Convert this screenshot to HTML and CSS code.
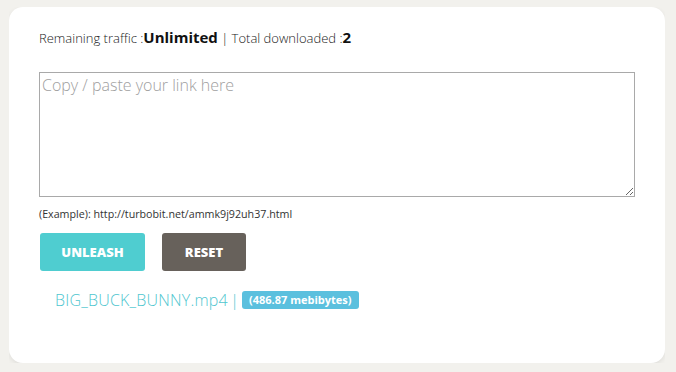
FILE: index.html
```html
<!DOCTYPE html>
<html>
<head>
  <title>Unleash</title>
  <link rel="stylesheet" href="styles.css">
</head>
<body>
  <div class="card">
    <div class="stats">
      Remaining traffic :<b class="big">Unlimited</b> | Total downloaded :<b class="big">2</b>
    </div>

    <textarea id="links" class="links" placeholder="Copy / paste your link here"></textarea>
    <div class="hint">(Example): http://turbobit.net/ammk9j92uh37.html</div>

    <div class="button-row">
      <button class="btn btn-go">Unleash</button>
      <button class="btn btn-reset" onclick="document.getElementById('links').value = ''">Reset</button>
    </div>

    <div class="result">
      <span class="file">BIG_BUCK_BUNNY.mp4 |</span>
      <span class="badge">(486.87 mebibytes)</span>
    </div>
  </div>
</body>
</html>
```

FILE: styles.css
```css
body {
  margin: 7px 11px 9px 9px;
  background-color: #f2f1ed;
  font-family: "Open Sans", "Noto Sans", sans-serif;
  color: #333;
}

.card {
  background-color: #fff;
  border-radius: 14px;
  padding: 20px 30px 53px 30px;
  box-shadow: 0 2px 5px rgba(0, 0, 0, 0.08);
}

/* top line */
.stats {
  font-size: 13px;
  font-weight: 300;
  line-height: 20px;
  color: #222;
}

.stats .big {
  font-size: 15px;
  font-weight: 700;
  color: #111;
}

/* link box */
.links {
  display: block;
  box-sizing: border-box;
  width: 596px;
  height: 125px;
  margin-top: 24px;
  padding: 0 2px;
  border: 1px solid #a9a9a9;
  font-family: "Open Sans", "Noto Sans", sans-serif;
  font-size: 16px;
  font-weight: 300;
  line-height: 24px;
}

.links::placeholder {
  color: #a0a0a0;
}

.hint {
  margin-top: 10px;
  font-size: 10.7px;
  line-height: 14px;
  color: #333;
}

.button-row {
  display: flex;
  gap: 17px;
  margin-top: 12px;
  padding-left: 1px;
}

.btn {
  height: 38px;
  border: none;
  border-radius: 3px;
  color: #fff;
  font-family: "Open Sans", "Noto Sans", sans-serif;
  font-size: 13px;
  font-weight: 800;
  text-transform: uppercase;
  cursor: pointer;
}

.btn-go {
  width: 105px;
  background-color: #4fcdd0;
}

.btn-reset {
  width: 84px;
  background-color: #67615b;
}

/* download result */
.result {
  margin-top: 19px;
  padding-left: 16px;
  line-height: 20px;
  display: flex;
  align-items: center;
  gap: 3px;
}

.file {
  font-size: 16px;
  font-weight: 300;
  letter-spacing: 0.2px;
  word-spacing: -2px;
  color: #4fc6cf;
}

.badge {
  background-color: #5bc0de;
  color: #fff;
  font-size: 11px;
  font-weight: 700;
  line-height: 14px;
  padding: 2px 7px;
  border-radius: 3px;
}
```
